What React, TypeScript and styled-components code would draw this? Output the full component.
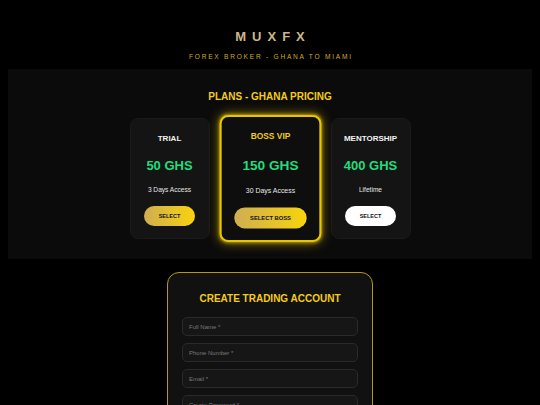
import styled, { createGlobalStyle } from 'styled-components';

const GlobalStyle = createGlobalStyle`
  * {
    box-sizing: border-box;
  }

  body {
    margin: 0;
    background: #000;
    font-family: 'Liberation Sans', Arial, sans-serif;
    color: #fff;
  }
`;

type Plan = {
  id: string;
  name: string;
  price: string;
  access: string;
  button: string;
  width: number;
  featured?: boolean;
  light?: boolean;
};

const plans: Plan[] = [
  { id: 'trial', name: 'TRIAL', price: '50 GHS', access: '3 Days Access', button: 'SELECT', width: 80 },
  {
    id: 'boss',
    name: 'BOSS VIP',
    price: '150 GHS',
    access: '30 Days Access',
    button: 'SELECT BOSS',
    width: 97,
    featured: true,
  },
  {
    id: 'mentorship',
    name: 'MENTORSHIP',
    price: '400 GHS',
    access: 'Lifetime',
    button: 'SELECT',
    width: 80,
    light: true,
  },
];

const fields = ['Full Name *', 'Phone Number *', 'Email *', 'Create Password *'];

const App: React.FC = () => {
  return (
    <>
      <GlobalStyle />
      <Page>
        <Header>
          <Logo>MUXFX</Logo>
          <Tagline>FOREX BROKER - GHANA TO MIAMI</Tagline>
        </Header>

        <PlansSection>
          <SectionTitle>PLANS - GHANA PRICING</SectionTitle>
          <PlanRow>
            {plans.map((plan) => (
              <PlanCard key={plan.id} $width={plan.width} $featured={plan.featured}>
                <PlanName $featured={plan.featured}>{plan.name}</PlanName>
                <PlanPrice>{plan.price}</PlanPrice>
                <PlanAccess>{plan.access}</PlanAccess>
                <SelectBtn $light={plan.light}>{plan.button}</SelectBtn>
              </PlanCard>
            ))}
          </PlanRow>
        </PlansSection>

        <FormCard>
          <FormTitle>CREATE TRADING ACCOUNT</FormTitle>
          <FieldList>
            {fields.map((field) => (
              <Field key={field} placeholder={field} />
            ))}
          </FieldList>
        </FormCard>
      </Page>
    </>
  );
};

const Page = styled.div`
  padding: 0 8px 40px;
`;

const Header = styled.header`
  display: flex;
  flex-direction: column;
  align-items: center;
  padding: 29px 0 8px;
`;

const Logo = styled.h1`
  margin: 0;
  font-size: 13px;
  line-height: 16px;
  font-weight: 700;
  letter-spacing: 6px;
  margin-right: -6px;
  color: #cdb78a;
`;

const Tagline = styled.p`
  margin: 8px 0 0;
  font-size: 6.6px;
  line-height: 8px;
  letter-spacing: 1.75px;
  margin-right: -1.75px;
  color: #d1aa2a;
`;

const PlansSection = styled.section`
  display: flex;
  flex-direction: column;
  align-items: center;
  padding: 22px 0 20px;
  background: #0b0b0b;
`;

const SectionTitle = styled.h2`
  margin: 0 0 15px;
  font-size: 10px;
  line-height: 12px;
  font-weight: 700;
  color: #f4cc16;
`;

const PlanRow = styled.div`
  display: flex;
  gap: 12px;
`;

const PlanCard = styled.div<{ $width: number; $featured?: boolean }>`
  width: ${({ $width }) => $width}px;
  display: flex;
  flex-direction: column;
  align-items: center;
  padding: ${({ $featured }) => ($featured ? '14px 0 11px' : '15px 0 12px')};
  border-radius: 8px;
  background: ${({ $featured }) => ($featured ? '#0e0e0e' : '#141414')};
  border: ${({ $featured }) => ($featured ? '2px solid #e8c406' : '1px solid #1a1a1a')};
  box-shadow: ${({ $featured }) =>
    $featured ? '0 0 10px rgba(240, 200, 0, 0.55), 0 0 3px rgba(240, 200, 0, 0.6)' : 'none'};
  transform: ${({ $featured }) => ($featured ? 'scale(1.05)' : 'none')};
`;

const PlanName = styled.h3<{ $featured?: boolean }>`
  margin: 0;
  font-size: 8px;
  line-height: 10px;
  font-weight: 700;
  color: ${({ $featured }) => ($featured ? '#f4cc16' : '#f2f2f2')};
`;

const PlanPrice = styled.div`
  margin-top: 14px;
  font-size: 13px;
  line-height: 16px;
  font-weight: 700;
  color: #22dc7c;
`;

const PlanAccess = styled.div`
  margin-top: 12px;
  font-size: 6.6px;
  line-height: 8px;
  color: #e6e6e6;
`;

const SelectBtn = styled.button<{ $light?: boolean }>`
  margin-top: 12px;
  height: 20px;
  padding: 0 15px;
  border: none;
  border-radius: 999px;
  font-family: inherit;
  font-size: 5.5px;
  font-weight: 700;
  color: #111;
  background: ${({ $light }) => ($light ? '#fff' : 'linear-gradient(90deg, #cfad52, #f8d40c)')};
  cursor: pointer;
`;

const FormCard = styled.div`
  width: 206px;
  margin: 13px auto 0;
  padding: 20px 14px 20px;
  border: 1.5px solid #b8961a;
  border-radius: 12px;
  background: #111;
`;

const FormTitle = styled.h2`
  margin: 0 0 12px;
  text-align: center;
  font-size: 10px;
  line-height: 12px;
  font-weight: 700;
  color: #f4cc16;
`;

const FieldList = styled.div`
  display: flex;
  flex-direction: column;
  gap: 7px;
`;

const Field = styled.input`
  width: 100%;
  height: 19px;
  padding: 0 6px;
  border: 1px solid #2a2a2a;
  border-radius: 5px;
  background: #161616;
  font-family: inherit;
  font-size: 6px;
  color: #ddd;
  outline: none;

  &::placeholder {
    color: #7a7a7a;
  }
`;

export default App;
